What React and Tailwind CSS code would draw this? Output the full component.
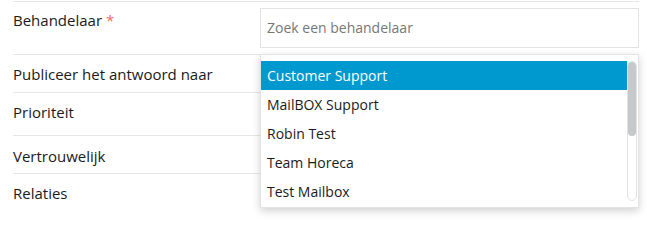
import React from "react";

const items = ["Customer Support", "MailBOX Support", "Robin Test", "Team Horeca", "Test Mailbox"];

export default function App() {
  return (
    <div
      className="w-[647px] h-[230px] bg-white text-[14px] leading-[20px] text-[#222]"
      style={{ fontFamily: '"Open Sans", "Noto Sans", sans-serif' }}
    >
      <div className="pt-[1px] pl-[13px] w-[639px]">
        <div className="relative flex items-start border-t border-[#e6e6e6] h-[53px] pt-[6px]">
          <div className="w-[247px] mt-[2px] text-[15px] text-[#1a1a1a]">
            Behandelaar <span className="text-[#f06a6a]">*</span>
          </div>
          <div className="flex-1 h-[40px] border border-[#e3e3e3] flex items-center pl-[6px] text-[#777]">
            Zoek een behandelaar
          </div>
          <div className="absolute z-10 left-[247px] top-[52px] w-[379px] h-[154px] bg-white border border-[#e3e3e3] shadow-[0_3px_8px_rgba(0,0,0,0.18)] pt-[6px] flex">
            <div className="flex-1 flex flex-col">
              {items.map((it, i) => (
                <div
                  key={it}
                  className={
                    "h-[29px] flex items-center pl-[6px] " +
                    (i === 0 ? "bg-[#0099cf] text-white" : "text-[#1a1a1a]")
                  }
                >
                  {it}
                </div>
              ))}
            </div>
            <div className="w-[10px] mr-[1px] h-[140px] rounded-[5px] border border-[#e2e2e2] bg-white overflow-hidden flex flex-col">
              <div className="h-[74px] rounded-[5px] bg-[#c6c8ca]"></div>
            </div>
          </div>
        </div>
        <div className="border-t border-[#e6e6e6] h-[38px] pt-[9px] text-[15px] text-[#1a1a1a]">Publiceer het antwoord naar</div>
        <div className="border-t border-[#e6e6e6] h-[43px] pt-[9px] text-[15px] text-[#1a1a1a]">Prioriteit</div>
        <div className="border-t border-[#e6e6e6] h-[38px] pt-[10px] text-[15px] text-[#1a1a1a]">Vertrouwelijk</div>
        <div className="border-t border-[#e6e6e6] h-[38px] pt-[9px] text-[15px] text-[#1a1a1a]">Relaties</div>
      </div>
    </div>
  );
}
